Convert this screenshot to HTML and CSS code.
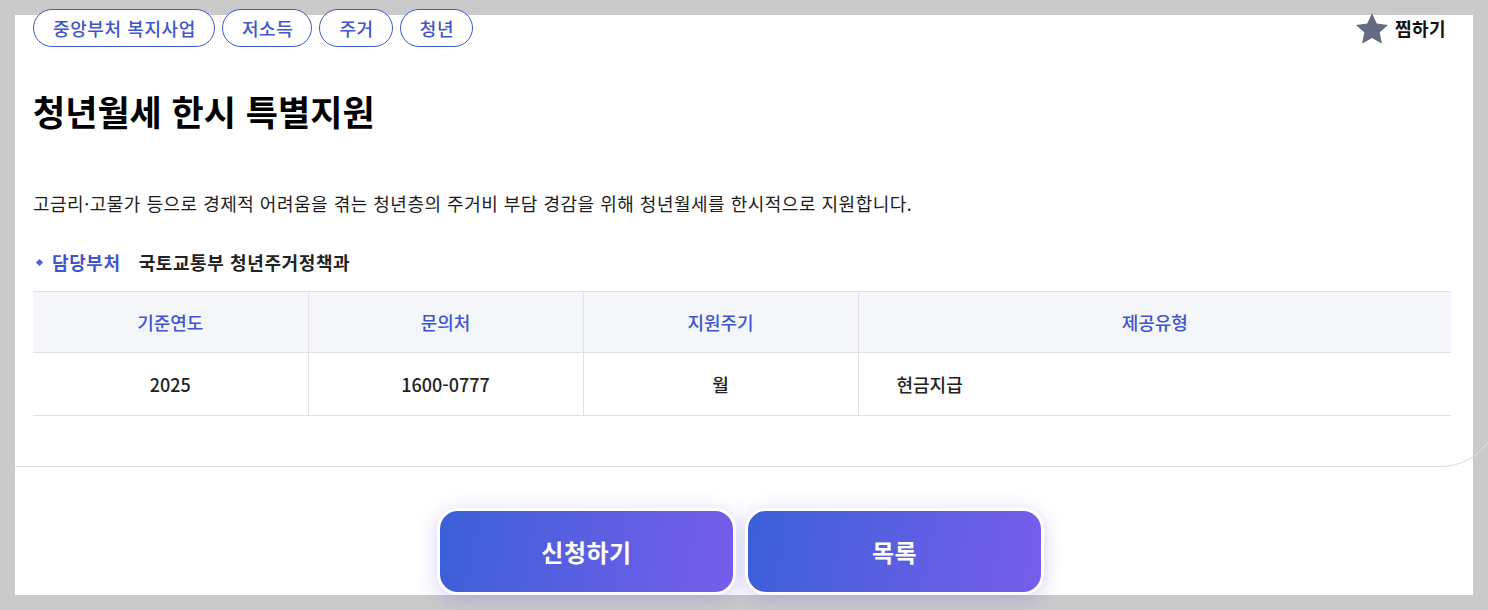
FILE: index.html
```html
<!DOCTYPE html>
<html lang="ko">
<head>
    <meta charset="UTF-8">
    <meta name="viewport" content="width=device-width, initial-scale=1.0">
    <title>청년월세 한시 특별지원</title>
    <link rel="stylesheet" href="styles.css">
</head>
<body>
    <div class="page">
        <div class="card">
            <div class="top-row">
                <div class="tags">
                    <span class="tag">중앙부처 복지사업</span>
                    <span class="tag">저소득</span>
                    <span class="tag">주거</span>
                    <span class="tag">청년</span>
                </div>
                <button class="bookmark">
                    <svg width="32" height="31" viewBox="0.9 0.6 22.2 21">
                        <path d="M12 0.6l3.3 7.1 7.8 0.9-5.8 5.3 1.6 7.7L12 17.7l-6.9 3.9 1.6-7.7L0.9 8.6l7.8-0.9z" fill="#656b83"/>
                    </svg>
                    <span>찜하기</span>
                </button>
            </div>

            <h1 class="title">청년월세 한시 특별지원</h1>

            <p class="desc">고금리·고물가 등으로 경제적 어려움을 겪는 청년층의 주거비 부담 경감을 위해 청년월세를 한시적으로 지원합니다.</p>

            <div class="dept">
                <span class="dept-label">담당부처</span>
                <span class="dept-name">국토교통부 청년주거정책과</span>
            </div>

            <table class="info">
                <colgroup>
                    <col class="col-sm">
                    <col class="col-sm">
                    <col class="col-sm">
                    <col>
                </colgroup>
                <thead>
                    <tr>
                        <th>기준연도</th>
                        <th>문의처</th>
                        <th>지원주기</th>
                        <th>제공유형</th>
                    </tr>
                </thead>
                <tbody>
                    <tr>
                        <td>2025</td>
                        <td>1600-0777</td>
                        <td>월</td>
                        <td class="left">현금지급</td>
                    </tr>
                </tbody>
            </table>
        </div>

        <div class="actions">
            <button class="btn">신청하기</button>
            <button class="btn">목록</button>
        </div>
    </div>
</body>
</html>
```

FILE: styles.css
```css
body {
    margin: 0;
    height: 610px;
    overflow: hidden;
    background-color: #cacaca;
    font-family: "Noto Sans CJK KR", "Noto Sans", sans-serif;
    color: #222;
}
.page {
    margin: 15px 15px 0;
    height: 580px;
    background-color: #fff;
    display: flex;
    flex-direction: column;
}
.card {
    display: flex;
    flex-direction: column;
    flex-shrink: 0;
    margin-right: -27px;
    padding: 0 50px 50px 18px;
    border-bottom: 1px solid #dedede;
    border-right: 1px solid #dedede;
    border-bottom-right-radius: 60px;
}
.top-row {
    display: flex;
    justify-content: space-between;
    align-items: center;
    margin-top: -6px;
    height: 38px;
}
.tags {
    display: flex;
    gap: 7px;
}
.tag {
    height: 36px;
    line-height: 36px;
    padding: 0 18px 0 19px;
    border: 1px solid #3f57cf;
    border-radius: 19px;
    background-color: #fff;
    color: #3f55c9;
    font-size: 18px;
    font-weight: 500;
    letter-spacing: 0.6px;
}
.bookmark {
    display: flex;
    align-items: center;
    gap: 7px;
    margin-right: 3px;
    padding: 0;
    border: none;
    background: none;
    font-family: inherit;
    font-size: 18px;
    font-weight: 700;
    letter-spacing: 0.4px;
    color: #111;
    cursor: pointer;
}
.title {
    margin: 41px 0 0;
    font-size: 35px;
    line-height: 45px;
    font-weight: 700;
    color: #000;
}
.desc {
    margin: 57px 0 0;
    font-size: 18px;
    line-height: 26px;
    letter-spacing: 0.5px;
    color: #1d1d1d;
}
.dept {
    display: flex;
    align-items: center;
    margin-top: 33px;
    height: 26px;
    font-size: 18px;
    font-weight: 700;
    letter-spacing: 0.6px;
}
.dept-label {
    display: flex;
    align-items: center;
    color: #3f55d0;
    margin-right: 18px;
}
.dept-label::before {
    content: "";
    width: 5px;
    height: 5px;
    margin: 0 10px 0 4px;
    background-color: #4a5ee0;
    transform: rotate(45deg);
}
.info {
    margin-top: 16px;
    width: 1418px;
    border-collapse: collapse;
    table-layout: fixed;
    font-size: 18px;
}
.col-sm {
    width: 275px;
}
.info th,
.info td {
    padding: 0;
    text-align: center;
    border-left: 1px solid #e3e3e3;
}
.info th:first-child,
.info td:first-child {
    border-left: none;
}
.info th {
    height: 60px;
    background-color: #f5f6fa;
    border-top: 1px solid #e1e1e1;
    border-bottom: 1px solid #e1e1e1;
    color: #3f55d0;
    font-weight: 500;
}
.info td {
    height: 62px;
    border-bottom: 1px solid #e1e1e1;
    font-weight: 500;
}
.info td.left {
    text-align: left;
    padding-left: 38px;
}
.actions {
    display: flex;
    flex-shrink: 0;
    justify-content: center;
    gap: 9px;
    margin-top: 41px;
    padding-right: 7px;
}
.btn {
    width: 299px;
    height: 87px;
    border: 3px solid #fff;
    border-radius: 21px;
    background: linear-gradient(100deg, #3b5fd8 0%, #5a5fe2 50%, #765deb 100%);
    box-shadow: 0 4px 20px rgba(100, 90, 220, 0.28);
    color: #fff;
    font-family: inherit;
    font-size: 24px;
    font-weight: 700;
    letter-spacing: 0.5px;
    cursor: pointer;
}
```
